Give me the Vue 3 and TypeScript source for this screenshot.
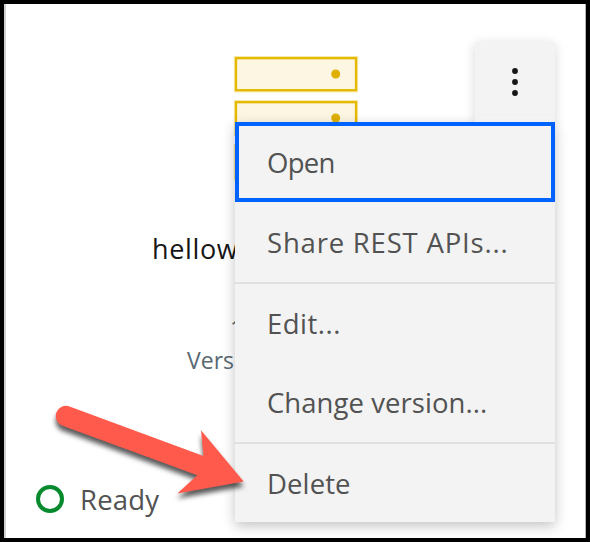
<script setup lang="ts">
interface MenuItem {
  label: string
  name: string
  divided?: boolean
}

const items: MenuItem[] = [
  { label: 'Open', name: 'open' },
  { label: 'Share REST APIs...', name: 'share' },
  { label: 'Edit...', name: 'edit', divided: true },
  { label: 'Change version...', name: 'change' },
  { label: 'Delete', name: 'delete', divided: true },
]
</script>

<template>
  <main class="card">
    <svg class="server" width="126" height="126" viewBox="0 0 126 126">
      <g v-for="n in 3" :key="n" :transform="`translate(0 ${(n - 1) * 44})`">
        <rect class="server-halo" x="3" y="3.2" width="120" height="32" />
        <rect class="server-body" x="3" y="3.2" width="120" height="32" />
        <circle class="server-dot" cx="102.7" cy="19" r="4.5" />
      </g>
    </svg>
    <h1 class="title">hellow</h1>
    <p class="meta count">1</p>
    <p class="meta version">Vers</p>
    <footer class="status">
      <svg width="28" height="28" viewBox="0 0 28 28">
        <circle class="ring" cx="14" cy="14" r="12" />
      </svg>
      <span class="status-text">Ready</span>
    </footer>

    <div class="overflow">
      <button class="trigger" aria-label="Options">
        <svg width="8" height="32" viewBox="0 0 8 32">
          <circle cx="4" cy="5" r="2.9" />
          <circle cx="4" cy="16" r="2.9" />
          <circle cx="4" cy="27" r="2.9" />
        </svg>
      </button>
      <ul class="menu">
        <li
          v-for="item in items"
          :key="item.name"
          class="item"
          :class="[item.name, { divided: item.divided }]"
        >
          {{ item.label }}
        </li>
      </ul>
    </div>

    <svg class="arrow" width="220" height="130" viewBox="40 390 220 130">
      <path
        d="M69.500 406.500 L203.500 456 L201 430.300 L243.700 481.500 L177.300 493.500 L197.300 475.300 L62.500 425.700 A10.200 10.200 0 0 1 69.500 406.500 Z"
      />
    </svg>
  </main>
</template>

<style>
body {
  margin: 0;
}
</style>

<style scoped>
.card {
  position: relative;
  box-sizing: border-box;
  width: 590px;
  height: 542px;
  overflow: hidden;
  display: flex;
  flex-direction: column;
  align-items: flex-start;
  border: 4px solid #000;
  background: #fff;
  box-shadow: inset 2px 0 #d0d0d0, inset -1px 0 #b4b4b4;
  font-family: 'Open Sans', 'Noto Sans', sans-serif;
  font-size: 27.5px;
  color: #525252;
}

.server {
  margin: 51px 0 0 229px;
  flex: none;
}

.server-halo {
  fill: none;
  stroke: #f8eaaa;
  stroke-width: 4.4;
}

.server-body {
  fill: #fdf6e2;
  stroke: #e5b800;
  stroke-width: 2.3;
}

.server-dot {
  fill: #e0b000;
}

.title {
  margin: 48px 0 0 148px;
  font-size: 27px;
  font-weight: 400;
  line-height: 40px;
  letter-spacing: 0.65px;
  color: #161616;
}

.meta {
  margin: 0;
  font-size: 23px;
  line-height: 32px;
  color: #5a6872;
}

.count {
  margin: 43px 0 0 226px;
}

.version {
  margin-left: 183px;
}

.status {
  display: flex;
  align-items: center;
  gap: 16px;
  margin: auto 0 17px 32px;
  height: 44px;
}

.ring {
  fill: #fff;
  stroke: #058a2e;
  stroke-width: 4;
}

.status-text {
  line-height: 40px;
  padding-top: 2px;
  letter-spacing: 0.2px;
}

.overflow {
  position: absolute;
  top: 38px;
  right: 31px;
  width: 320px;
  display: flex;
  flex-direction: column;
  align-items: flex-end;
}

.trigger {
  box-sizing: border-box;
  width: 80px;
  height: 80px;
  padding: 0;
  border: 0;
  border-radius: 4px 4px 0 0;
  display: flex;
  align-items: center;
  justify-content: center;
  background: #f3f3f3;
  box-shadow: 0 2px 12px rgba(0, 0, 0, 0.16);
}

.trigger svg {
  fill: #161616;
}

.menu {
  position: relative;
  box-sizing: border-box;
  width: 320px;
  height: 400px;
  margin: 0;
  padding: 0;
  list-style: none;
  background: #f3f3f3;
  box-shadow: 0 4px 12px rgba(0, 0, 0, 0.24);
}

/* Joins the trigger to the menu across the menu's shadow. */
.menu::before {
  content: '';
  position: absolute;
  top: -6px;
  right: 0;
  width: 80px;
  height: 6px;
  background: #f3f3f3;
}

.item {
  box-sizing: border-box;
  height: 80px;
  padding-left: 32px;
  display: flex;
  align-items: center;
  white-space: pre;
}

.divided {
  border-top: 2px solid #e0e0e0;
}

.open {
  padding-left: 28px;
  border: 4px solid #0062ff;
  letter-spacing: -0.7px;
}

.share {
  letter-spacing: 0.8px;
}

.edit {
  letter-spacing: 0.5px;
}

.change {
  letter-spacing: 0.05px;
}

.delete {
  letter-spacing: 0.1px;
}

.arrow {
  position: absolute;
  left: 36px;
  top: 386px;
  fill: #ff5a4c;
  filter: drop-shadow(0 5px 2.5px rgba(0, 0, 0, 0.65));
}
</style>
